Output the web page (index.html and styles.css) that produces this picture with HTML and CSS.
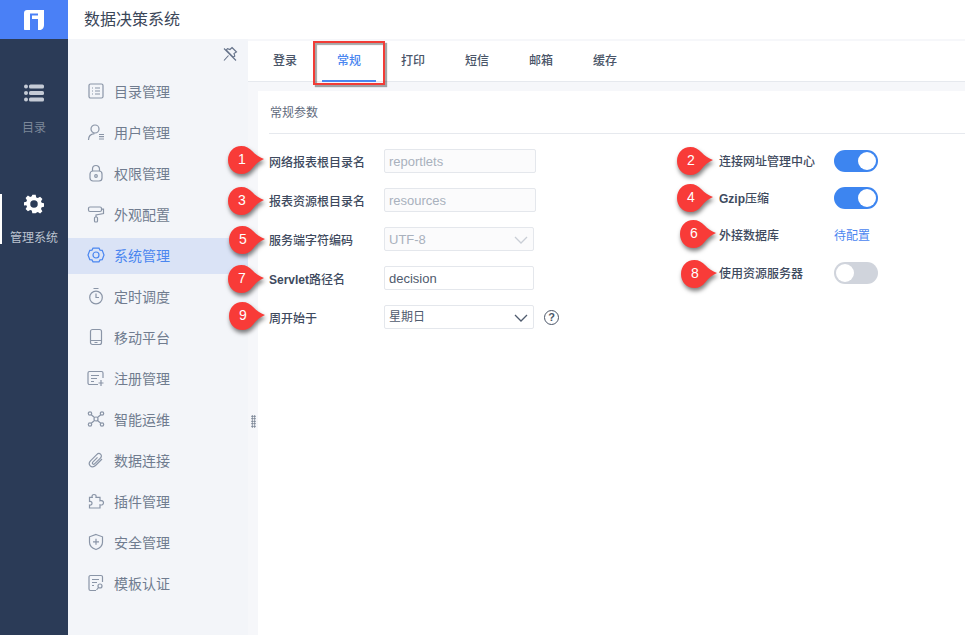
FILE: index.html
```html
<!DOCTYPE html>
<html lang="zh-CN">
<head>
    <meta charset="UTF-8">
    <meta name="viewport" content="width=device-width, initial-scale=1.0">
    <title>数据决策系统</title>
    <link rel="stylesheet" href="styles.css">
</head>
<body>
    <div class="app">
        <div class="rail">
            <div class="logo">
                <svg viewBox="0 0 20 20" width="20" height="20">
                    <path fill="#FFFFFF" d="M3 0H20V15C20 18 18 20 15.500 20H14V9H8V5.500H14V3.500H6V20H1C.4 20 0 19.600 0 19V3C0 1.300 1.300 0 3 0Z"/>
                </svg>
            </div>
            <div class="rail-item">
                <svg class="rail-icon" viewBox="0 0 20 20">
                    <circle cx="2" cy="3.500" r="2"/><rect x="5" y="1.500" width="15" height="4" rx="1.500"/>
                    <circle cx="2" cy="10" r="2"/><rect x="5" y="8" width="15" height="4" rx="1.500"/>
                    <circle cx="2" cy="16.500" r="2"/><rect x="5" y="14.500" width="15" height="4" rx="1.500"/>
                </svg>
                <div class="rail-text">目录</div>
            </div>
            <div class="rail-item active">
                <svg class="rail-icon" viewBox="0 0 24 24">
                    <path fill-rule="evenodd" d="M10 1h4l.7 3.100 1.900.8 2.700-1.700 2.800 2.800-1.700 2.700.8 1.900 3.100.7v4l-3.100.7-.8 1.900 1.700 2.700-2.800 2.800-2.700-1.700-1.900.8L14 23h-4l-.7-3.100-1.900-.8-2.700 1.700-2.800-2.800 1.700-2.700-.8-1.900L-.3 14v-4l3.100-.7.8-1.900-1.700-2.700 2.800-2.800 2.700 1.700 1.900-.8zM12 7.500a4.500 4.500 0 1 0 0 9 4.500 4.500 0 0 0 0-9z"/>
                </svg>
                <div class="rail-text">管理系统</div>
            </div>
        </div>

        <div class="main">
            <div class="top-bar">数据决策系统</div>
            <div class="body-row">
                <div class="side-menu">
                    <div class="pin">
                        <svg viewBox="0 0 16 16" fill="none" stroke="#66738A" stroke-width="1.100">
                            <path d="M10 1.500l4.500 4.500-2.500 1.500.8 2.500-1.300 1.300-7.300-7.300 1.300-1.300 2.500.8zM6.500 9.500l-4.500 5M2 2.500l12 12"/>
                        </svg>
                    </div>
                    <div class="menu-item">
                        <svg class="menu-icon" viewBox="0 0 18 18"><rect x="2" y="2" width="14" height="14" rx="1.500"/><path d="M5 6h1M8 6h5M5 9h1M8 9h5M5 12h1M8 12h5"/></svg>
                        <span>目录管理</span>
                    </div>
                    <div class="menu-item">
                        <svg class="menu-icon" viewBox="0 0 18 18"><circle cx="8" cy="6" r="4"/><path d="M1.500 17c0-3.500 2.500-6 6-6.300M12 11.500h5M12 13.700h5M12 16h5"/></svg>
                        <span>用户管理</span>
                    </div>
                    <div class="menu-item">
                        <svg class="menu-icon" viewBox="0 0 18 18"><rect x="3" y="7" width="12" height="10" rx="3"/><path d="M5.500 7V5a3.500 3.500 0 0 1 7 0v2"/><circle cx="9" cy="12" r="1.300"/></svg>
                        <span>权限管理</span>
                    </div>
                    <div class="menu-item">
                        <svg class="menu-icon" viewBox="0 0 18 18"><rect x="1.500" y="2" width="13" height="4.500" rx="1.500"/><path d="M14.500 4.200h2v4.300L9 10v2"/><rect x="7.500" y="12" width="3" height="5" rx="1"/></svg>
                        <span>外观配置</span>
                    </div>
                    <div class="menu-item active">
                        <svg class="menu-icon" viewBox="0 0 18 18"><path d="M6 2.200h6l1 1.900 2.200.2L17 9l-1.800 4.700-2.200.2-1 1.900H6l-1-1.900-2.200-.2L1 9l1.800-4.700L5 4.100z"/><circle cx="9" cy="9" r="3"/></svg>
                        <span>系统管理</span>
                    </div>
                    <div class="menu-item">
                        <svg class="menu-icon" viewBox="0 0 18 18"><circle cx="9" cy="10.500" r="6.300"/><path d="M6.500 1.500h5M9 6.500v4h3"/></svg>
                        <span>定时调度</span>
                    </div>
                    <div class="menu-item">
                        <svg class="menu-icon" viewBox="0 0 18 18"><rect x="3.500" y="1.500" width="11" height="15" rx="2"/><path d="M3.500 12.500h11M7.500 14.500h3"/></svg>
                        <span>移动平台</span>
                    </div>
                    <div class="menu-item">
                        <svg class="menu-icon" viewBox="0 0 18 18"><path d="M16 9V4a1.500 1.500 0 0 0-1.500-1.500h-12A1.500 1.500 0 0 0 1 4v10a1.500 1.500 0 0 0 1.500 1.500H11"/><path d="M4 6.500h8M4 9.500h6M4 12.500h3M14 11v6M11.500 14h5"/></svg>
                        <span>注册管理</span>
                    </div>
                    <div class="menu-item">
                        <svg class="menu-icon" viewBox="0 0 18 18"><circle cx="9" cy="9" r="2"/><circle cx="3" cy="3.500" r="1.700"/><circle cx="15" cy="3.500" r="1.700"/><circle cx="3" cy="14.500" r="1.700"/><circle cx="15" cy="14.500" r="1.700"/><path d="M4.300 4.700l3.200 2.800M13.700 4.700l-3.200 2.800M4.300 13.300l3.200-2.800M13.700 13.300l-3.200-2.800"/></svg>
                        <span>智能运维</span>
                    </div>
                    <div class="menu-item">
                        <svg class="menu-icon" viewBox="0 0 18 18"><path d="M15 8l-6.500 6.500c-1.700 1.700-4 1.700-5.300.3-1.300-1.400-1.200-3.500.5-5.200l6-6c1.300-1.300 3-1.300 4-.3s.9 2.600-.3 3.800l-5.600 5.600c-.7.700-1.600.7-2.100.2s-.4-1.300.3-2l4.500-4.500"/></svg>
                        <span>数据连接</span>
                    </div>
                    <div class="menu-item">
                        <svg class="menu-icon" viewBox="0 0 18 18"><path d="M7 2.500c1.500 0 2.500 1 2 2.800h4v3.500c1.800-.6 3.500.2 3.500 2s-1.700 2.600-3.500 2V16H2.500v-3c1.500.3 2.500-.5 2.500-1.800S4 9 2.500 9.500V5.300h2.700C4.600 3.700 5.500 2.500 7 2.500z"/></svg>
                        <span>插件管理</span>
                    </div>
                    <div class="menu-item">
                        <svg class="menu-icon" viewBox="0 0 18 18"><path d="M9 1.500l6.500 2.300v5.400c0 3.600-2.800 6-6.500 7.300-3.700-1.300-6.500-3.700-6.500-7.300V3.800zM9 5.800v6M6 8.800h6"/></svg>
                        <span>安全管理</span>
                    </div>
                    <div class="menu-item">
                        <svg class="menu-icon" viewBox="0 0 18 18"><path d="M15.500 8V3a1.500 1.500 0 0 0-1.500-1.500H3.500A1.500 1.500 0 0 0 2 3v12a1.500 1.500 0 0 0 1.500 1.500H9"/><path d="M5 5.500h7M5 8.500h5M5 11.500h2"/><circle cx="13" cy="12" r="2"/><path d="M11.500 13.500l-2 2.500"/></svg>
                        <span>模板认证</span>
                    </div>
                </div>

                <div class="content">
                    <div class="tabs">
                        <div class="tab">登录</div>
                        <div class="tab active">常规</div>
                        <div class="tab">打印</div>
                        <div class="tab">短信</div>
                        <div class="tab">邮箱</div>
                        <div class="tab">缓存</div>
                    </div>
                    <div class="panel">
                        <div class="panel-title">常规参数</div>
                        <div class="form">
                            <div class="form-col left-col">
                                <div class="form-row">
                                    <div class="form-label">网络报表根目录名</div>
                                    <div class="field wide disabled">reportlets</div>
                                </div>
                                <div class="form-row">
                                    <div class="form-label">报表资源根目录名</div>
                                    <div class="field wide disabled">resources</div>
                                </div>
                                <div class="form-row">
                                    <div class="form-label">服务端字符编码</div>
                                    <div class="field disabled">UTF-8
                                        <svg class="arrow" viewBox="0 0 14 8"><path d="M1 1l6 6 6-6"/></svg>
                                    </div>
                                </div>
                                <div class="form-row">
                                    <div class="form-label"><b>Servlet</b>路径名</div>
                                    <div class="field">decision</div>
                                </div>
                                <div class="form-row">
                                    <div class="form-label">周开始于</div>
                                    <div class="field cjk">星期日
                                        <svg class="arrow" viewBox="0 0 14 8"><path d="M1 1l6 6 6-6"/></svg>
                                    </div>
                                    <div class="help">?</div>
                                </div>
                            </div>
                            <div class="form-col right-col">
                                <div class="switch-row">
                                    <div class="form-label">连接网址管理中心</div>
                                    <div class="switch on"></div>
                                </div>
                                <div class="switch-row">
                                    <div class="form-label"><b>Gzip</b>压缩</div>
                                    <div class="switch on"></div>
                                </div>
                                <div class="switch-row">
                                    <div class="form-label">外接数据库</div>
                                    <div class="link">待配置</div>
                                </div>
                                <div class="switch-row last">
                                    <div class="form-label">使用资源服务器</div>
                                    <div class="switch"></div>
                                </div>
                            </div>
                        </div>
                    </div>
                    <div class="drag-handle"></div>
                </div>
            </div>
        </div>

        <!-- annotations drawn on top of the screenshot -->
        <svg class="defs" width="0" height="0">
            <symbol id="drop" viewBox="0 0 38 28" preserveAspectRatio="none">
                <path d="M14 0C19 0 22.500 2 26 5.500C29 8.500 33 11.500 38 13C33 15 29 18 26 22C22.500 26 19 28 14 28C6 28 0 22 0 14C0 6 6 0 14 0Z"/>
            </symbol>
        </svg>
        <div class="mark-box"></div>
        <div class="badge b1"><svg><use href="#drop"/></svg><span>1</span></div>
        <div class="badge b2"><svg><use href="#drop"/></svg><span>2</span></div>
        <div class="badge b3"><svg><use href="#drop"/></svg><span>3</span></div>
        <div class="badge b4"><svg><use href="#drop"/></svg><span>4</span></div>
        <div class="badge b5"><svg><use href="#drop"/></svg><span>5</span></div>
        <div class="badge b6"><svg><use href="#drop"/></svg><span>6</span></div>
        <div class="badge b7"><svg><use href="#drop"/></svg><span>7</span></div>
        <div class="badge b8"><svg><use href="#drop"/></svg><span>8</span></div>
        <div class="badge b9"><svg><use href="#drop"/></svg><span>9</span></div>
    </div>
</body>
</html>
```

FILE: styles.css
```css
* {
    margin: 0;
    padding: 0;
    box-sizing: border-box;
    font-family: "Liberation Sans", "Noto Sans CJK SC", sans-serif;
}

body {
    background: #FFFFFF;
    color: #3E4A5E;
    overflow: hidden;
}

.app {
    position: relative;
    display: flex;
    width: 965px;
    height: 635px;
    overflow: hidden;
}

.rail {
    width: 68px;
    background: #2B3B57;
    flex-shrink: 0;
}

.logo {
    height: 39px;
    background: #4A80F6;
    display: flex;
    align-items: center;
    justify-content: center;
}

.rail-item {
    height: 50px;
    margin-top: 44px;
    text-align: center;
    color: #7C8799;
}

.rail-item.active {
    margin-top: 61px;
    color: #BCC3CF;
    border-left: 2px solid #FFFFFF;
    padding-right: 2px;
}

.rail-icon {
    display: block;
    width: 20px;
    height: 20px;
    margin: 0 auto 17px;
    fill: #C5CBD6;
}

.active .rail-icon {
    fill: #FFFFFF;
    margin-bottom: 16px;
}

.rail-text {
    font-size: 12px;
    line-height: 16px;
}

.main {
    flex: 1;
    display: flex;
    flex-direction: column;
    min-width: 0;
}

.top-bar {
    height: 39px;
    padding-left: 16px;
    font-size: 16px;
    line-height: 39px;
    color: #3A4658;
    background: #FFFFFF;
}

.body-row {
    flex: 1;
    display: flex;
    min-height: 0;
}

.side-menu {
    position: relative;
    width: 180px;
    padding-top: 35px;
    background: #F3F5F9;
    flex-shrink: 0;
}

.pin {
    position: absolute;
    top: 7px;
    left: 154px;
    width: 16px;
    height: 16px;
}

.menu-item {
    display: flex;
    align-items: center;
    height: 36px;
    margin-bottom: 5px;
    padding: 0 0 2px 19px;
    font-size: 14px;
    color: #707C8F;
}

.menu-item.active {
    background: #DAE3F6;
    color: #4A86F0;
}

.menu-icon {
    width: 18px;
    height: 18px;
    margin-right: 9px;
    fill: none;
    stroke: #8A95A7;
    stroke-width: 1.200;
}

.active .menu-icon {
    stroke: #4A86F0;
}

.content {
    position: relative;
    flex: 1;
    min-width: 0;
    padding-top: 2px;
    background: #F6F7FA;
}

.tabs {
    display: flex;
    height: 41px;
    padding-left: 5px;
    background: #FFFFFF;
    border-bottom: 1px solid #E6E9EE;
}

.tab {
    position: relative;
    width: 64px;
    font-size: 12px;
    font-weight: 500;
    line-height: 41px;
    text-align: center;
    color: #4A5568;
}

.tab.active {
    color: #4A86F0;
}

.tab.active::after {
    content: "";
    position: absolute;
    left: 5px;
    right: 5px;
    bottom: -1px;
    height: 2px;
    background: #4A86F0;
}

.panel {
    height: 100%;
    margin: 9px 0 0 10px;
    background: #FFFFFF;
}

.panel-title {
    height: 43px;
    margin-left: 11px;
    padding-left: 1px;
    font-size: 12px;
    line-height: 45px;
    color: #5F6B7D;
    border-bottom: 1px solid #E6E9EE;
}

.form {
    display: flex;
    padding: 15px 0 0 11px;
}

.form-col {
    display: flex;
    flex-direction: column;
    gap: 15px;
}

.left-col {
    width: 450px;
}

.right-col {
    padding-top: 1px;
}

.form-row {
    display: flex;
    align-items: center;
    height: 24px;
}

.form-label {
    width: 115px;
    font-size: 12px;
    font-weight: 500;
    color: #3E4A5E;
    flex-shrink: 0;
}

.form-label b {
    font-weight: 700;
}

.field {
    position: relative;
    width: 150px;
    height: 24px;
    padding-left: 4px;
    font-size: 13px;
    line-height: 24px;
    color: #4F5B6E;
    border: 1px solid #E4E7EC;
    border-radius: 2px;
}

.field.cjk {
    font-size: 12px;
    line-height: 22px;
}

.field.wide {
    width: 152px;
}

.field.disabled {
    color: #A9B1BD;
    background: #FBFBFC;
}

.arrow {
    position: absolute;
    top: 8px;
    right: 5px;
    width: 14px;
    height: 8px;
    fill: none;
    stroke: #4F5B6E;
    stroke-width: 1.300;
}

.disabled .arrow {
    stroke: #C9CED6;
}

.help {
    width: 15px;
    height: 15px;
    margin-left: 10px;
    font-size: 11px;
    font-weight: 700;
    line-height: 12px;
    text-align: center;
    color: #4A5568;
    border: 1.300px solid #4A5568;
    border-radius: 50%;
}

.switch-row {
    display: flex;
    align-items: center;
    height: 22px;
}

.switch-row .form-label {
    padding-bottom: 1px;
}

.switch-row.last {
    margin-top: 1px;
}

.switch {
    position: relative;
    width: 44px;
    height: 22px;
    background: #D0D4DC;
    border-radius: 11px;
}

.switch::after {
    content: "";
    position: absolute;
    top: 2px;
    left: 2px;
    width: 18px;
    height: 18px;
    background: #FFFFFF;
    border-radius: 50%;
}

.switch.on {
    background: #3D85F0;
}

.switch.on::after {
    left: 24px;
}

.link {
    padding-bottom: 2px;
    font-size: 12px;
    color: #4A86F0;
}

.drag-handle {
    position: absolute;
    top: 376px;
    left: 3px;
    width: 5px;
    height: 13px;
    background-image: radial-gradient(#6B7688 0.8px, transparent 1px);
    background-size: 2.500px 2.500px;
}

.defs {
    position: absolute;
}

.mark-box {
    position: absolute;
    top: 41px;
    left: 313px;
    width: 72px;
    height: 44px;
    border: 2px solid #F23C36;
    box-shadow: 2px 2px 1px rgba(0, 0, 0, 0.35), inset 2px 2px 1px rgba(0, 0, 0, 0.35);
}

.badge {
    position: absolute;
    width: 36px;
    height: 28px;
}

.badge svg {
    display: block;
    width: 36px;
    height: 28px;
    fill: #F83B38;
    overflow: visible;
    filter: drop-shadow(1px 3px 2px rgba(0, 0, 0, 0.5));
}

.badge span {
    position: absolute;
    top: 0;
    left: 0;
    width: 28px;
    font-size: 14px;
    font-weight: 500;
    line-height: 27px;
    text-align: center;
    color: #FFFFFF;
}

.b1 { left: 228px; top: 146px; }
.b2 { left: 677px; top: 147px; }
.b3 { left: 228px; top: 187px; }
.b4 { left: 677px; top: 184px; }
.b5 { left: 229px; top: 226px; }
.b6 { left: 680px; top: 220px; }
.b7 { left: 228px; top: 265px; }
.b8 { left: 681px; top: 260px; }
.b9 { left: 229px; top: 302px; }
```
